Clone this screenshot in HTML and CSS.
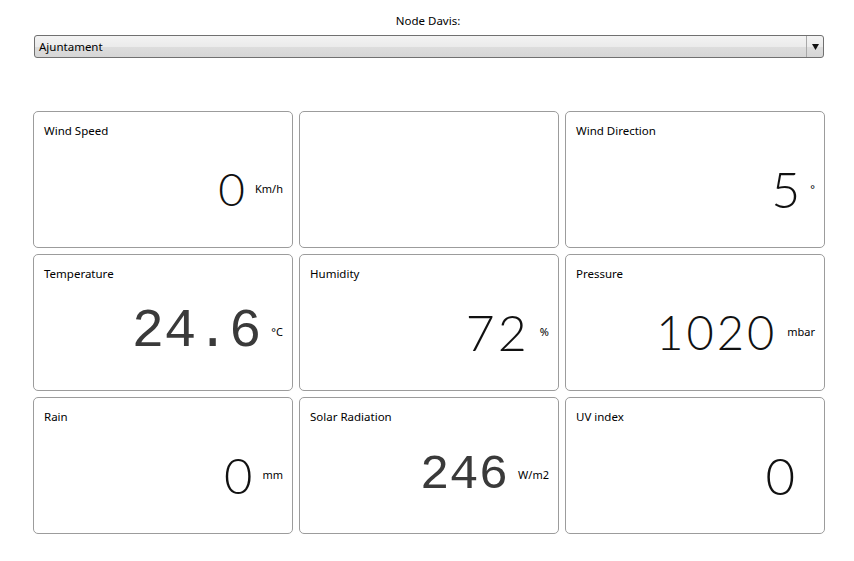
FILE: index.html
```
<!DOCTYPE html>
<html>
<head>
<meta charset="utf-8">
<link rel="stylesheet" href="styles.css">
</head>
<body>
<div class="page">
  <div class="node-label">Node Davis:</div>
  <div class="select">
    <span class="select-text">Ajuntament</span>
    <span class="select-btn"><svg width="7" height="6" viewBox="0 0 7 6"><path d="M0 0H7L3.5 6Z" fill="#111"/></svg></span>
  </div>
  <div class="grid">
    <div class="card">
      <div class="title">Wind Speed</div>
      <div class="value-row"><span class="num sans s46">0</span><span class="unit">Km/h</span></div>
    </div>
    <div class="card"></div>
    <div class="card">
      <div class="title">Wind Direction</div>
      <div class="value-row"><span class="num sans s50">5</span><span class="unit">°</span></div>
    </div>
    <div class="card">
      <div class="title">Temperature</div>
      <div class="value-row"><span class="num mono s54">24.6</span><span class="unit">°C</span></div>
    </div>
    <div class="card">
      <div class="title">Humidity</div>
      <div class="value-row"><span class="num sans s50 wide">72</span><span class="unit">%</span></div>
    </div>
    <div class="card">
      <div class="title">Pressure</div>
      <div class="value-row"><span class="num sans s47 wide">1020</span><span class="unit">mbar</span></div>
    </div>
    <div class="card">
      <div class="title">Rain</div>
      <div class="value-row"><span class="num sans s49">0</span><span class="unit">mm</span></div>
    </div>
    <div class="card">
      <div class="title">Solar Radiation</div>
      <div class="value-row"><span class="num mono s49">246</span><span class="unit">W/m2</span></div>
    </div>
    <div class="card">
      <div class="title">UV index</div>
      <div class="value-row"><span class="num sans s51">0</span><span class="unit empty"></span></div>
    </div>
  </div>
</div>
</body>
</html>
```
FILE: styles.css
```
html, body {
  margin: 0;
  padding: 0;
  background: #ffffff;
}
body {
  font-family: "Noto Sans", "Open Sans", sans-serif;
  font-size: 12px;
  color: #000;
}
.page {
  width: 854px;
  padding-top: 13px;
}
.node-label {
  text-align: center;
  line-height: 16px;
  height: 16px;
  padding-left: 2px;
  font-size: 11.5px;
}
.select {
  margin: 6px 0 0 34px;
  width: 790px;
  height: 23px;
  box-sizing: border-box;
  border: 1px solid #707070;
  border-radius: 3px;
  background: linear-gradient(#f3f3f3 0%, #ebebeb 50%, #dddddd 51%, #d6d6d6 100%);
  display: flex;
  align-items: center;
  justify-content: space-between;
}
.select-text {
  padding-left: 4px;
  font-size: 11.5px;
  line-height: 16px;
}
.select-btn {
  width: 16px;
  height: 100%;
  border-left: 1px solid #a8a8a8;
  display: flex;
  align-items: center;
  justify-content: center;
}
.grid {
  margin: 53px 0 0 33px;
  display: grid;
  grid-template-columns: repeat(3, 260px);
  grid-auto-rows: 137px;
  gap: 6px;
}
.card {
  box-sizing: border-box;
  border: 1px solid #9c9c9c;
  border-radius: 5px;
  background: #fff;
  padding: 11px 9px 0 10px;
  display: flex;
  flex-direction: column;
}
.title {
  line-height: 16px;
  height: 16px;
  font-size: 11.5px;
}
.value-row {
  margin-top: 20px;
  height: 60px;
  display: flex;
  justify-content: flex-end;
  align-items: center;
}
.num {
  line-height: 1;
  color: #111;
}
.sans {
  font-family: Lato, "Noto Sans", sans-serif;
  font-weight: 300;
}
.mono {
  font-family: "Liberation Mono", "DejaVu Sans Mono", monospace;
  color: #3a3a3a;
}
.wide {
  letter-spacing: 3px;
}
.s46 { font-size: 46px; }
.s47 { font-size: 47px; }
.s49 { font-size: 49px; }
.s50 { font-size: 50px; }
.s51 { font-size: 51px; }
.s54 { font-size: 54px; }
.unit {
  font-size: 11px;
  margin-left: 10px;
  line-height: 14px;
}
.unit.empty {
  width: 10px;
}
```
